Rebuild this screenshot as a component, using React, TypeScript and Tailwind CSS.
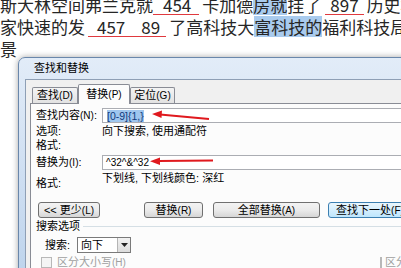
const cjk = "font-['Noto_Sans_CJK_SC','Noto_Sans',sans-serif]"
const ui = "font-['Liberation_Sans','Noto_Sans_CJK_SC',sans-serif]"

function Under({ children, className = '' }: { children: React.ReactNode; className?: string }) {
  return (
    <span className={`inline-block border-b border-[#e0393e] leading-[19px] ${className}`}>{children}</span>
  )
}

function Hi({ children }: { children: React.ReactNode }) {
  return <span className="inline-block bg-[#a9cbee] leading-[21px]">{children}</span>
}

// mnemonic in brackets, drawn a little smaller like the old bitmap font
function K({ c }: { c: string }) {
  return <span className="text-[10px]">({c})</span>
}

function Tab({ label, k, w, active }: { label: string; k: string; w: string; active?: boolean }) {
  if (active) {
    return (
      <div
        className={`${w} relative z-10 -mb-px h-[20px] flex items-center justify-center border border-b-0 border-[#898c95] bg-[#fcfcfc] rounded-t-[2px] whitespace-nowrap`}
      >
        {label}
        <K c={k} />
      </div>
    )
  }
  return (
    <div
      className={`${w} h-[16px] flex items-center justify-center border border-b-0 border-[#898c95] bg-gradient-to-b from-[#f4f4f4] to-[#e2e2e2] rounded-t-[2px] whitespace-nowrap`}
    >
      {label}
      <K c={k} />
    </div>
  )
}

function Btn({ label, k, className = '', focus }: { label: string; k: string; className?: string; focus?: boolean }) {
  return (
    <div
      className={`h-[16px] shrink-0 flex items-center justify-center rounded-[3px] border whitespace-nowrap ${
        focus
          ? 'border-[#3c7fb1] bg-gradient-to-b from-[#eaf6fd] to-[#bee6fd]'
          : 'border-[#707070] bg-gradient-to-b from-[#f3f3f3] via-[#ebebeb] to-[#d6d6d6]'
      } ${className}`}
    >
      {label}
      <K c={k} />
    </div>
  )
}

export default function App() {
  return (
    <div className={`relative w-[401px] h-[268px] overflow-hidden bg-white ${cjk}`}>
      {/* document text */}
      <div className="-mt-[6px] text-[17px] leading-[22px] text-[#262626] whitespace-nowrap">
        <div>
          斯大林空间弗兰克就<Under className="pl-[10px] pr-[8px] mr-[3px]">454</Under>卡加德<Hi>房就</Hi>挂了
          <Under className="ml-[4px] px-[5px] mr-[3px]">897</Under>历史档
        </div>
        <div>
          家快速的发
          <Under className="ml-[3px] pl-[9px] pr-[6px] mr-[3px]">
            457<span className="inline-block w-[16px]" />89
          </Under>
          了高科技大<Hi>富科技的</Hi>福利科技局
        </div>
        <div>景</div>
      </div>

      {/* dialog window */}
      <div
        className={`absolute left-[18px] top-[57px] w-[420px] h-[230px] rounded-t-[7px] border border-[#6a87ab] bg-gradient-to-b from-[#e2ecf8] via-[#cfdff2] to-[#bcd3ec] pl-[6px] shadow-[0_0_6px_rgba(0,0,0,0.35)] text-[11px] text-black ${ui}`}
      >
        <div className="h-[21px] flex items-center pl-[9px] text-[11px]">查找和替换</div>
        <div className="h-full bg-[#f0f0f0] border-l border-t border-[#8e9fb5] pl-[4px] pt-[4px]">
          <div className="flex items-end h-[19px] ml-[2px]">
            <Tab label="查找" k="D" w="w-[46px]" />
            <Tab label="替换" k="P" w="w-[52px]" active />
            <Tab label="定位" k="G" w="w-[45px]" />
          </div>

          <div className="h-[200px] border border-[#898c95] bg-[#fcfcfc] pl-[5px] flex flex-col whitespace-nowrap">
            <div className="mt-[4px] h-[15px] flex items-center">
              <div className="w-[66px] shrink-0">
                查找内容<K c="N" />:
              </div>
              <div className="flex-1 h-[15px] border border-[#abadb3] bg-white flex items-center pl-[4px] text-[10.5px]">
                <span className="bg-[#9fc6ee] text-[#123a7c] leading-[12px]">[0-9]{'{'}1,{'}'}</span>
              </div>
            </div>
            <div className="mt-[1px] h-[14px] flex items-center">
              <div className="w-[66px] shrink-0">选项:</div>
              <div>向下搜索, 使用通配符</div>
            </div>
            <div className="h-[14px] flex items-center">
              <div className="w-[66px] shrink-0">格式:</div>
            </div>
            <div className="mt-[3px] h-[15px] flex items-center">
              <div className="w-[66px] shrink-0">
                替换为<K c="I" />:
              </div>
              <div className="flex-1 h-[15px] border border-[#abadb3] bg-white flex items-center pl-[3px] text-[10px]">
                ^32^&amp;^32
              </div>
            </div>
            <div className="mt-[1px] h-[19px] flex">
              <div className="w-[66px] shrink-0 self-end leading-[14px]">格式:</div>
              <div className="self-start leading-[14px]">下划线, 下划线颜色: 深红</div>
            </div>

            <div className="mt-[12px] flex">
              <Btn label="<< 更少" k="L" className="ml-[2px] w-[62px]" />
              <Btn label="替换" k="R" className="ml-[44px] w-[59px]" />
              <Btn label="全部替换" k="A" className="ml-[10px] w-[107px]" />
              <Btn label="查找下一处" k="F" className="ml-[8px] w-[84px]" focus />
            </div>

            <div className="mt-[1px] h-[14px] flex items-center">
              <div className="shrink-0">搜索选项</div>
              <div className="ml-[3px] flex-1 h-px bg-[#d5dfe5]" />
            </div>

            <div className="mt-[4px] h-[16px] flex items-center pl-[9px]">
              <div className="w-[32px] shrink-0">搜索:</div>
              <div className="w-[54px] h-[16px] border border-[#7a7a7a] bg-white flex items-center">
                <div className="flex-1 pl-[3px]">向下</div>
                <div className="w-[13px] h-full border-l border-[#b5b5b5] bg-gradient-to-b from-[#f2f2f2] to-[#dcdcdc] flex items-center justify-center">
                  <svg width="7" height="4" viewBox="0 0 7 4">
                    <polygon points="0,0 7,0 3.5,4" fill="#222" />
                  </svg>
                </div>
              </div>
            </div>

            <div className="mt-[3px] h-[12px] flex items-center pl-[5px] text-[#a0a0a0]">
              <div className="w-[339px] shrink-0 flex items-center">
                <div className="w-[11px] h-[11px] border border-[#b8b8b8] bg-[#f4f4f4]" />
                <div className="ml-[5px]">
                  区分大小写<K c="H" />
                </div>
              </div>
              <div className="w-[11px] h-[11px] border border-[#b8b8b8] bg-[#f4f4f4]" />
              <div className="ml-[3px]">区分全/半角</div>
            </div>
          </div>
        </div>
      </div>

      {/* red annotation arrows */}
      <svg className="absolute left-0 top-0 pointer-events-none" width="401" height="268" viewBox="0 0 401 268">
        <line x1="160" y1="114.6" x2="209" y2="119" stroke="#e0191e" strokeWidth="2" />
        <polygon points="152,114 162,110.5 161.5,118" fill="#e0191e" />
        <line x1="158" y1="161" x2="213" y2="160.5" stroke="#e0191e" strokeWidth="2" />
        <polygon points="150,161.3 160,157.5 160,165" fill="#e0191e" />
      </svg>
    </div>
  )
}
